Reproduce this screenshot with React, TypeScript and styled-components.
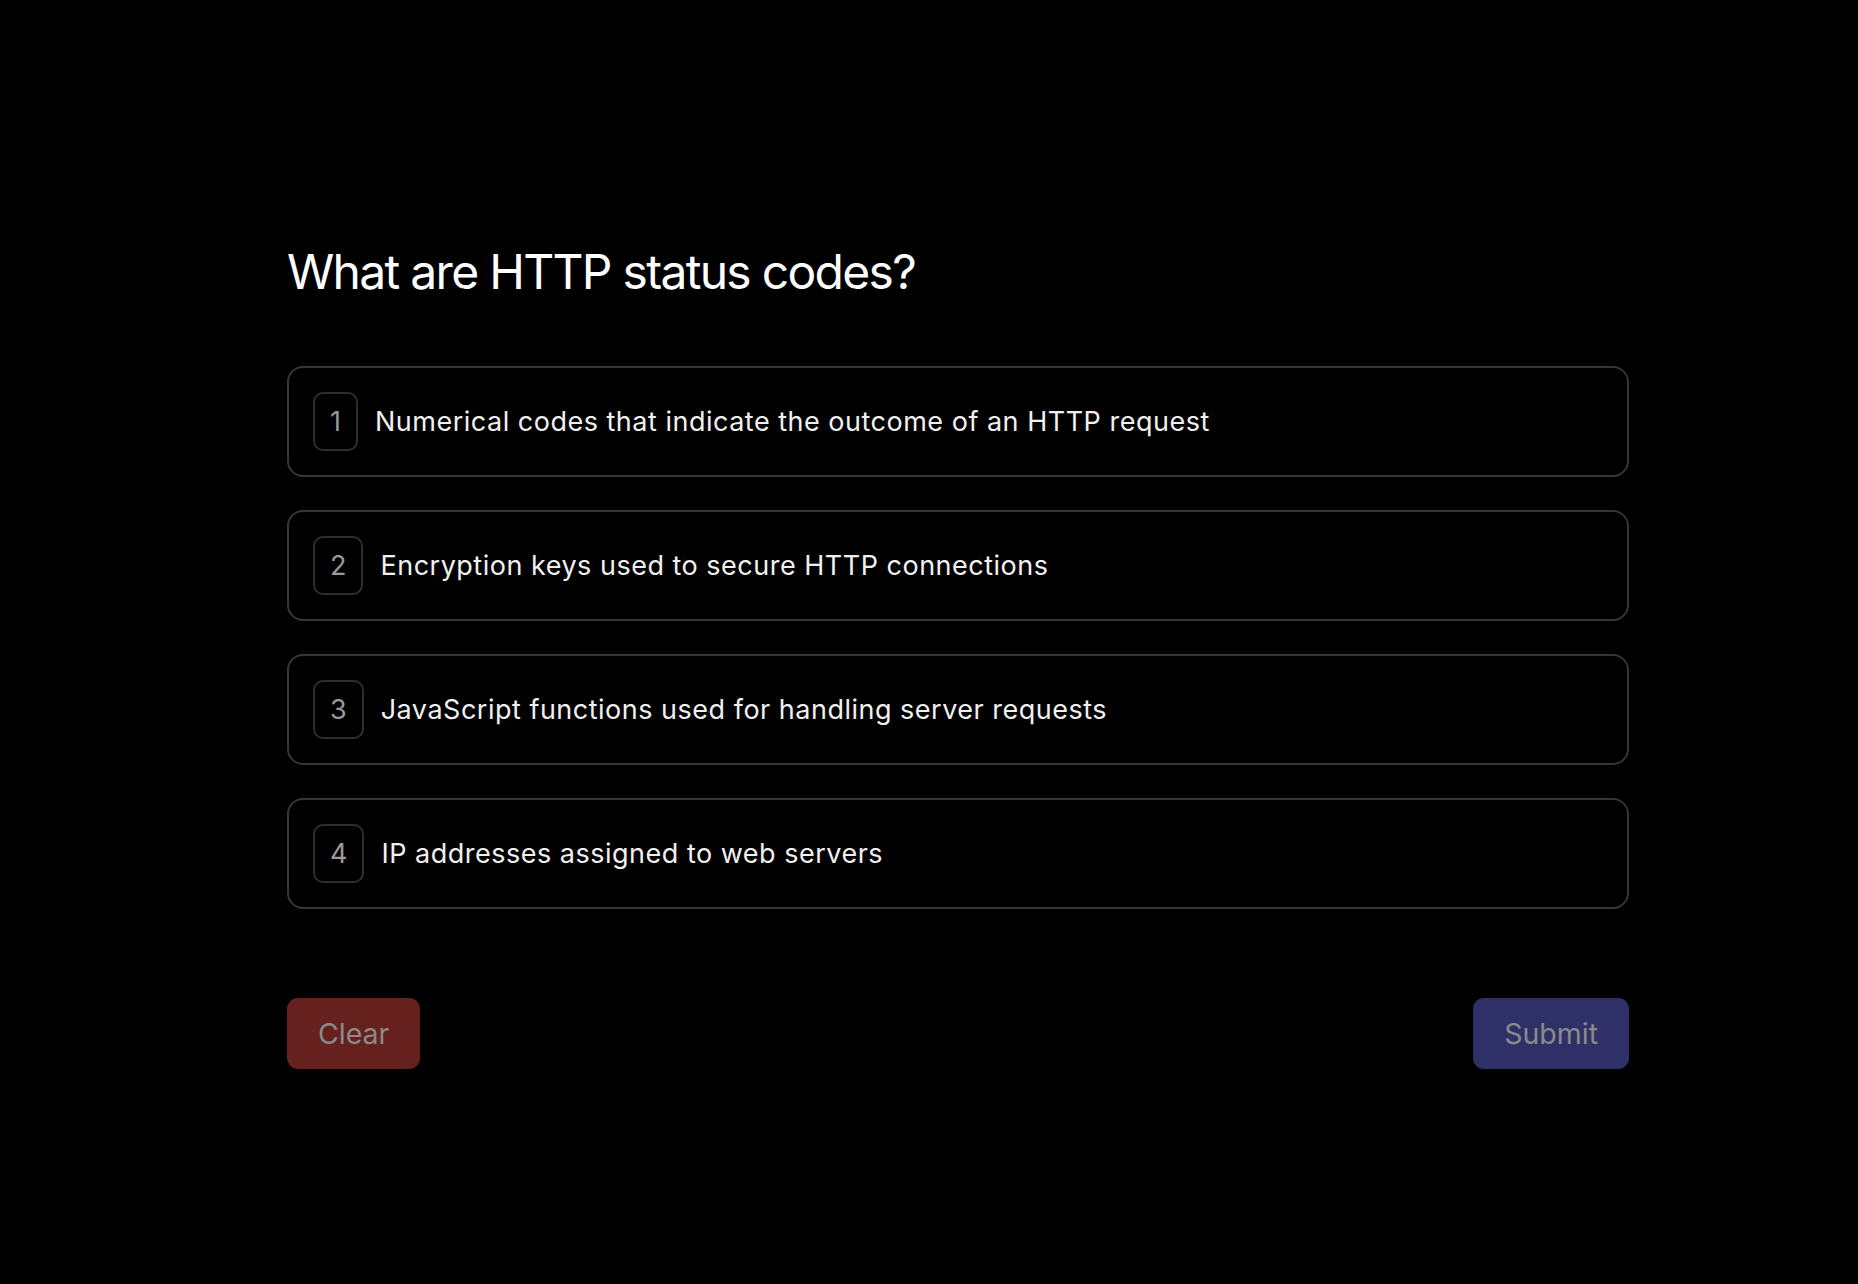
import styled, { createGlobalStyle } from "styled-components";

const GlobalStyle = createGlobalStyle`
  html, body {
    margin: 0;
    padding: 0;
    background: #000;
  }
  body {
    font-family: Inter, "Noto Sans", "Liberation Sans", sans-serif;
    color: #f2f2f2;
  }
`;

const Page = styled.div`
  min-height: 1284px;
  display: flex;
  flex-direction: column;
  padding: 238px 229px 0 287px;
  box-sizing: border-box;
`;

const Title = styled.h1`
  margin: 0 0 60px;
  font-size: 48px;
  font-weight: 400;
  line-height: 68px;
  color: #fff;
  letter-spacing: -1.7px;
`;

const OptionList = styled.div`
  display: flex;
  flex-direction: column;
  gap: 33px;
`;

const OptionCard = styled.button`
  display: flex;
  align-items: center;
  gap: 17px;
  height: 111px;
  padding: 0 24px;
  box-sizing: border-box;
  background: #000;
  border: 2px solid #363636;
  border-radius: 16px;
  font-family: inherit;
  text-align: left;
  cursor: pointer;
`;

const Badge = styled.span`
  display: flex;
  align-items: center;
  justify-content: center;
  height: 59px;
  padding: 0 15px;
  box-sizing: border-box;
  border: 2px solid #2e2e2e;
  border-radius: 10px;
  font-size: 27px;
  color: #9a9a9a;
`;

const OptionText = styled.span`
  font-size: 27px;
  color: #f0f0f0;
  letter-spacing: 0.5px;
`;

const Actions = styled.div`
  display: flex;
  justify-content: space-between;
  margin-top: 89px;
`;

const ActionButton = styled.button<{ $tone: "red" | "indigo" }>`
  height: 71px;
  padding: 0 31px;
  border: none;
  border-radius: 11px;
  font-family: inherit;
  font-size: 28.5px;
  color: #8a8a8a;
  background: ${(p) => (p.$tone === "red" ? "#66201e" : "#303068")};
  cursor: not-allowed;
`;

const options = [
  "Numerical codes that indicate the outcome of an HTTP request",
  "Encryption keys used to secure HTTP connections",
  "JavaScript functions used for handling server requests",
  "IP addresses assigned to web servers",
];

const App = () => {
  return (
    <>
      <GlobalStyle />
      <Page>
        <Title>What are HTTP status codes?</Title>
        <OptionList>
          {options.map((text, i) => (
            <OptionCard key={text}>
              <Badge>{i + 1}</Badge>
              <OptionText>{text}</OptionText>
            </OptionCard>
          ))}
        </OptionList>
        <Actions>
          <ActionButton $tone="red">Clear</ActionButton>
          <ActionButton $tone="indigo">Submit</ActionButton>
        </Actions>
      </Page>
    </>
  );
};

export default App;
